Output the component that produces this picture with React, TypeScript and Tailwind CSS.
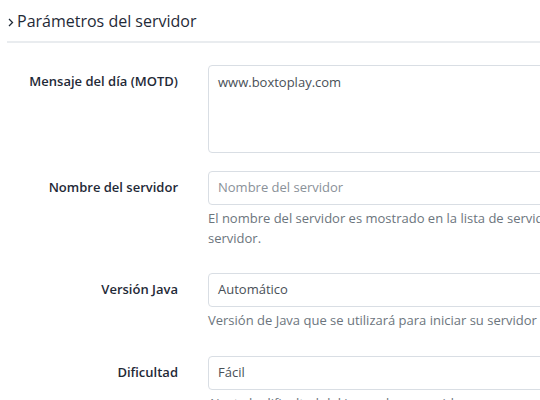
const font = { fontFamily: '"Open Sans", "Liberation Sans", sans-serif' };

interface Field {
  label: string;
  kind: 'textarea' | 'input' | 'select';
  value?: string;
  placeholder?: string;
  help?: React.ReactNode;
}

const fields: Field[] = [
  { label: 'Mensaje del día (MOTD)', kind: 'textarea', value: 'www.boxtoplay.com' },
  {
    label: 'Nombre del servidor',
    kind: 'input',
    placeholder: 'Nombre del servidor',
    help: (
      <>
        <span className="whitespace-nowrap">El nombre del servidor es mostrado en la lista de servidores de Minecraft cuando se añade el</span>
        <br />
        servidor.
      </>
    ),
  },
  {
    label: 'Versión Java',
    kind: 'select',
    value: 'Automático',
    help: <span className="whitespace-nowrap">Versión de Java que se utilizará para iniciar su servidor</span>,
  },
  {
    label: 'Dificultad',
    kind: 'select',
    value: 'Fácil',
    help: <span className="whitespace-nowrap">Ajuste la dificultad del juego de su servidor</span>,
  },
];

export default function App() {
  return (
    <div className="w-[540px] h-[400px] overflow-hidden bg-white text-[#212529]" style={font}>
      <div className="pl-[7px] pt-[9px]">
        <h2 className="flex items-center gap-[3px] text-[16px] leading-[24px] text-[#1f2a37] pl-[1px]">
          <svg width="6" height="9" viewBox="0 0 6 9" className="mt-[2px]">
            <path d="M1 1l3.5 3.5L1 8" fill="none" stroke="#1f2a37" strokeWidth="1.3" />
          </svg>
          Parámetros del servidor
        </h2>
        <div className="mt-[8px] h-[2px] bg-[#e9ecef] w-[600px]" />
      </div>

      <div className="mt-[22px] flex flex-col">
        {fields.map((f, i) => (
          <div key={i} className={`flex ${i === 2 ? 'mb-[19px]' : 'mb-[18px]'}`}>
            <label className="w-[178px] shrink-0 text-right text-[13px] font-semibold leading-[20px] pt-[6px] text-[#1f2a37]">
              {f.label}
            </label>
            <div className="ml-[30px] w-[420px] shrink-0">
              {f.kind === 'textarea' ? (
                <div className="h-[88px] border border-[#d9dee4] rounded-[4px] px-[9px] pt-[6px] text-[13px] leading-[20px] text-[#495057]">
                  {f.value}
                </div>
              ) : (
                <div className="h-[34px] border border-[#d9dee4] rounded-[4px] px-[9px] flex items-center text-[13px] text-[#495057]">
                  {f.placeholder ? <span className="text-[#8a9199]">{f.placeholder}</span> : f.value}
                </div>
              )}
              {f.help && (
                <div className="mt-[3px] text-[13px] leading-[20px] text-[#6c757d] pb-[7px]">{f.help}</div>
              )}
            </div>
          </div>
        ))}
      </div>
    </div>
  );
}
